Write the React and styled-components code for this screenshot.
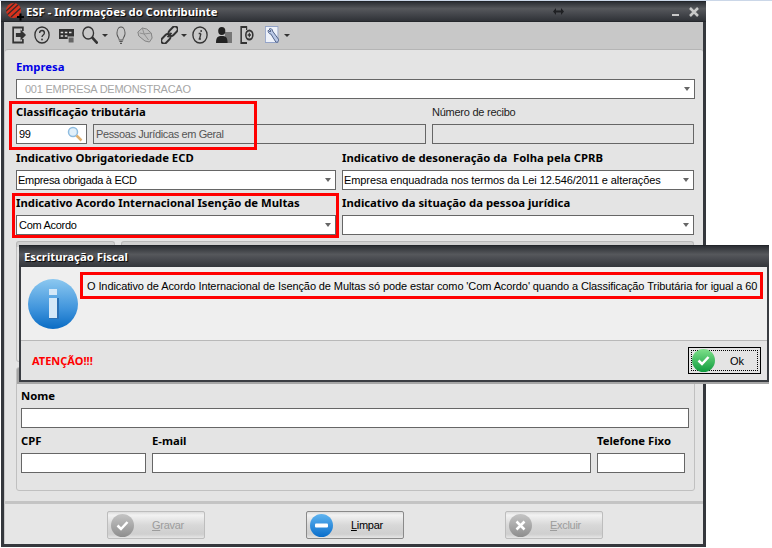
import React from "react";
import styled, { createGlobalStyle } from "styled-components";

const Global = createGlobalStyle`
  html, body { margin: 0; padding: 0; background: linear-gradient(#cbd7e8 0 1px, #fff 1px); }
  body { width: 772px; height: 548px; overflow: hidden; font-family: "Liberation Sans", Arial, sans-serif; font-size: 11px; color: #000; }
  * { box-sizing: border-box; }
`;

const boldFont = `font-family: "Noto Sans", "Liberation Sans", sans-serif; font-weight: 700; font-size: 11.3px; letter-spacing: 0;`;

const Page = styled.div`
  position: relative;
  width: 772px;
  height: 548px;
  padding: 1px 0 0 1px;
`;
const Win = styled.div`
  width: 705px;
  height: 546px;
  display: flex;
  flex-direction: column;
  background: #c8c8c8;
  border: solid #35383d;
  border-width: 0 3px 3px 3px;
`;
const TitleBar = styled.div`
  height: 21px;
  margin: 0 -3px;
  display: flex;
  align-items: center;
  padding: 0 7px 0 4px;
  background: linear-gradient(#2c2f34, #56585c 35%, #4a4c51 55%, #2f3237);
  border-top: 1px solid #22252a;
  border-bottom: 1px solid #25282c;
`;
const Title = styled.div`
  margin-left: 2px;
  ${boldFont}
  color: #fff;
  text-shadow: 1px 1px 1px #000;
  flex: 1;
`;
const ResizeMark = styled.svg`
  width: 11px;
  height: 7px;
  margin-right: 99px;
`;
const WinBtn = styled.svg`
  width: 10px;
  height: 10px;
  margin-left: 8px;
`;
const Toolbar = styled.div`
  height: 27px;
  display: flex;
  align-items: center;
  padding: 0 0 1px 8px;
  background: #c8c8c8;
`;
const Tool = styled.svg.attrs({ preserveAspectRatio: "none", viewBox: "0 0 18 18" })`
  width: ${p => p.$w}px;
  height: 18px;
  margin-right: ${p => p.$gap}px;
  flex: none;
`;
const DropCaret = styled.span`
  width: 6px;
  height: 0;
  margin: 1px ${p => p.$gap}px 0 0;
  border: 3px solid transparent;
  border-top: 3px solid #333;
  border-bottom: 0;
  flex: none;
`;
const Panel = styled.div`
  flex: none;
  margin: 0 0 0 1px;
  height: 452px;
  padding: 10px 8px 0 11px;
  background: #e4e4e4;
  border-top: 1px solid #b5b5b5;
  border-radius: 3px 3px 0 0;
  display: flex;
  flex-direction: column;
`;
const Row = styled.div`
  display: grid;
  grid-template-columns: ${p => p.$cols};
  column-gap: 6px;
  margin-top: ${p => p.$top ?? 6}px;
`;
const Field = styled.div`
  min-width: 0;
`;
const Label = styled.div`
  height: 14px;
  line-height: 14px;
  margin-bottom: 5px;
  white-space: nowrap;
  ${p => (p.$plain ? "font-weight: 400; letter-spacing: -0.25px;" : boldFont)}
  color: ${p => p.$color || "#000"};
`;
const Box = styled.div`
  height: 20px;
  display: flex;
  align-items: center;
  justify-content: space-between;
  padding: 0 ${p => p.$pr ?? 4}px 0 ${p => p.$pl ?? 1}px;
  background: ${p => (p.$off ? "#e4e4e4" : "#fff")};
  border: 1px solid #666;
  color: ${p => p.$color || "#000"};
  white-space: nowrap;
  overflow: hidden;
  letter-spacing: ${p => p.$ls ?? -0.3}px;
`;
const Caret = styled.span`
  width: 0;
  height: 0;
  border: 3px solid transparent;
  border-top: 4px solid #666;
  border-bottom: 0;
  flex: none;
`;
const TabRow = styled.div`
  margin-top: 6px;
  height: 6px;
  display: grid;
  grid-template-columns: 99px 573px;
  column-gap: 6px;
`;
const Tab = styled.div`
  background: #d0d0d0;
  border-radius: 3px 3px 0 0;
  border: 1px solid #b8b8b8;
  border-bottom: 0;
`;
const GroupTop = styled.div`
  height: 115px;
  border: 1px solid #c0c0c0;
  border-top: 0;
  border-radius: 0 0 3px 3px;
`;
const GroupLow = styled.div`
  margin-top: 5px;
  height: 124px;
  padding: 21px 4px 0 4px;
  border: 1px solid #c0c0c0;
  border-radius: 3px;
  background: linear-gradient(#a4a4a4 0 16px, #e4e4e4 16px);
`;
const NomeField = styled(Field)`
  margin-right: 1px;
`;
const Footer = styled.div`
  flex: 1;
  margin: 0 0 0 1px;
  display: flex;
  align-items: flex-start;
  gap: 101px;
  padding: 7px 0 0 102px;
  background: #e6e6e6;
  border-top: 3px solid #c4c4c4;
  border-radius: 3px 3px 0 0;
`;
const Btn = styled.div`
  width: 98px;
  height: 28px;
  display: flex;
  align-items: center;
  padding-left: 3px;
  border: 1px solid ${p => (p.$off ? "#bdbdbd" : "#8a8a8a")};
  border-radius: 2px;
  background: linear-gradient(#dcdcdc, #f2f2f2 12%, #d8d8d8 50%, #cfcfcf 85%, #e6e6e6);
  color: ${p => (p.$off ? "#9c9c9c" : "#000")};
`;
const BtnText = styled.span`
  margin-left: 18px;
  letter-spacing: -0.3px;
  u { text-underline-offset: 1px; }
`;
const Circle = styled.svg`
  width: 23px;
  height: 23px;
  flex: none;
`;
const Outline = styled.div`
  position: absolute;
  left: ${p => p.$x}px;
  top: ${p => p.$y}px;
  width: ${p => p.$w}px;
  height: ${p => p.$h}px;
  border: 3px solid #f00;
  pointer-events: none;
`;
const Dialog = styled.div`
  position: absolute;
  left: 19px;
  top: 245px;
  width: 750px;
  height: 137px;
  display: flex;
  flex-direction: column;
  background: #efefef;
  border: solid #3a3d42;
  border-width: 0 2px 2px 2px;
  box-shadow: 0 2px 0 #a6a6a6;
`;
const DlgTitle = styled.div`
  height: 22px;
  margin: 0 -2px;
  padding-left: 5px;
  display: flex;
  align-items: center;
  ${boldFont}
  color: #fff;
  text-shadow: 1px 1px 1px #000;
  background: linear-gradient(#2c2f34, #56585c 40%, #4a4c51 60%, #33363b);
  border-top: 1px solid #22252a;
`;
const DlgBody = styled.div`
  height: 73px;
  display: flex;
  padding: 12px 0 0 7px;
  background: #efefef;
`;
const InfoIcon = styled.svg`
  width: 50px;
  height: 50px;
  flex: none;
`;
const Message = styled.div`
  margin: -1px 0 0 9px;
  height: 16px;
  line-height: 16px;
  white-space: nowrap;
  letter-spacing: -0.1px;
`;
const DlgFoot = styled.div`
  flex: 1;
  display: flex;
  align-items: center;
  justify-content: space-between;
  padding: 0 6px 0 11px;
  background: #e4e4e4;
  border-top: 1px solid #b8b8b8;
`;
const Warn = styled.div`
  ${boldFont}
  font-size: 11px;
  color: #f00;
`;
const OkBtn = styled.div`
  width: 73px;
  height: 27px;
  display: flex;
  align-items: center;
  padding: 2px;
  border: 1px solid #000;
  background: #e4e4e4;
`;
const OkInner = styled.div`
  width: 100%;
  height: 100%;
  display: flex;
  align-items: center;
  border: 1px dotted #000;
  span { margin-left: 15px; }
`;

const stroke = { fill: "none", stroke: "#333", strokeWidth: 1.5 };

const Logo = () => (
  <svg width="19" height="18" viewBox="0 0 19 18">
    <defs><clipPath id="lg"><circle cx="8.500" cy="7.500" r="7.500" /></clipPath></defs>
    <circle cx="8.500" cy="7.500" r="7.500" fill="#d8321e" />
    <g clipPath="url(#lg)" stroke="#3a2a28" strokeWidth="1.300">
      <path d="M0 9 L10 0 M2 12 L14 1 M6 14 L17 4" />
    </g>
    <path d="M12 14h7M15.500 10.500v7" stroke="#000" strokeWidth="2" />
  </svg>
);

const Ico = {
  exit: (
    <Tool $w={14} $gap={8}>
      <path d="M14 5V1.500H1.500v15H14v-3.500" fill="none" stroke="#333" strokeWidth="2.200" />
      <path d="M5 7h6V3.500L18 9l-7 5.500V11H5z" fill="#333" />
    </Tool>
  ),
  help: (
    <Tool $w={16} $gap={9}>
      <circle cx="9" cy="9" r="8" {...stroke} />
      <path d="M6.300 7c.2-3.300 5.400-3.300 5.400 0 0 2-2.700 2-2.700 4" {...stroke} />
      <circle cx="9" cy="13.500" r="1" fill="#333" />
    </Tool>
  ),
  keys: (
    <Tool $w={15} $gap={8}>
      <rect x="0" y="3" width="18" height="10" fill="#333" />
      <path d="M2 6.500h3M7 6.500h3M12 6.500h3M2 10h3M7 10h3" stroke="#ddd" strokeWidth="1.500" />
      <rect x="11" y="11" width="7" height="6" fill="#666" stroke="#c8c8c8" />
    </Tool>
  ),
  search: (
    <Tool $w={16} $gap={4}>
      <circle cx="7" cy="7" r="6" {...stroke} />
      <path d="M11 11l6.500 6.500" stroke="#333" strokeWidth="2.800" />
    </Tool>
  ),
  bulb: (
    <Tool $w={12} $gap={10}>
      <path d="M9 1a6 6 0 0 0-4 10.500c1 1 1.200 1.500 1.200 2.500h5.600c0-1 .2-1.500 1.200-2.500A6 6 0 0 0 9 1z" fill="none" stroke="#555" strokeWidth="1.200" />
      <path d="M6.500 15.500h5M7.500 17.300h3" stroke="#555" strokeWidth="1.200" />
    </Tool>
  ),
  map: (
    <Tool $w={16} $gap={8}>
      <path d="M1 6l5-4 5 1 5 4 1 5-3 4-5-1-7-5z" fill="#c0c0c0" stroke="#808080" />
      <path d="M6 2l2 6 5 6M3 7l5 1 8-1" fill="none" stroke="#8e8e8e" />
    </Tool>
  ),
  link: (
    <Tool $w={17} $gap={3}>
      <g transform="rotate(-45 9 9)" fill="none" stroke="#333" strokeWidth="2">
        <rect x="-2" y="6" width="11" height="6" rx="3" />
        <rect x="9" y="6" width="11" height="6" rx="3" />
        <path d="M6 9h6" />
      </g>
    </Tool>
  ),
  info: (
    <Tool $w={16} $gap={8}>
      <circle cx="9" cy="9" r="8" {...stroke} />
      <path d="M10 7.500L8.500 13M7.500 7.500h2.300M7.500 13h2.500" {...stroke} />
      <circle cx="10.300" cy="5" r="1" fill="#333" />
    </Tool>
  ),
  user: (
    <Tool $w={16} $gap={8}>
      <rect x="10" y="6" width="8" height="11" fill="#777" />
      <circle cx="6.500" cy="5" r="4" fill="#222" />
      <path d="M0 17c0-6 2-7 6.500-7s6.500 1 6.500 7z" fill="#222" />
    </Tool>
  ),
  doc: (
    <Tool $w={14} $gap={11}>
      <path d="M9 1H1.500v16H9" fill="none" stroke="#333" strokeWidth="2" />
      <path d="M1.500 1h7v3" {...stroke} />
      <circle cx="12" cy="9" r="4.500" fill="none" stroke="#333" strokeWidth="2" />
      <path d="M9.800 9h4.400M12 6.800v4.400" stroke="#333" strokeWidth="1.400" />
    </Tool>
  ),
  tools: (
    <Tool $w={15} $gap={4}>
      <rect x="0.500" y="0.500" width="15" height="16" fill="#eef2fa" stroke="#93a3c8" />
      <path d="M5 3c2-1 4 0 4 2l7 8c1 2-1 4-3 3L7 8C5 8 3 6 4 4l2 2 1-1z" fill="#b9c8e6" stroke="#47597f" strokeWidth="1" />
    </Tool>
  ),
};

const Lens = () => (
  <svg width="16" height="16" viewBox="0 0 16 16">
    <circle cx="6" cy="6" r="4.500" fill="#e2f0fa" stroke="#8fbce0" strokeWidth="1.500" />
    <path d="M9.500 9.500l5 5" stroke="#e0b070" strokeWidth="2.500" />
  </svg>
);

const GlyphCircle = ({ id, top, bot, children }) => (
  <Circle viewBox="0 0 23 23">
    <defs>
      <linearGradient id={id} x1="0" y1="0" x2="0" y2="1">
        <stop offset="0" stopColor={top} />
        <stop offset="1" stopColor={bot} />
      </linearGradient>
    </defs>
    <circle cx="11.500" cy="11.500" r="11.500" fill={`url(#${id})`} />
    {children}
  </Circle>
);
const Check = () => <path d="M6.500 11.500l3.500 3.500 6.500-7" fill="none" stroke="#fff" strokeWidth="2.500" />;

export default function App() {
  return (
    <Page>
      <Global />
      <Win>
        <TitleBar>
          <Logo />
          <Title>ESF - Informações do Contribuinte</Title>
          <ResizeMark viewBox="0 0 11 7">
            <path d="M0 3.500L3 0v2.500h5V0l3 3.500L8 7V4.500H3V7z" fill="#1f2023" />
          </ResizeMark>
          <WinBtn viewBox="0 0 10 10"><rect x="1" y="7" width="7" height="2" fill="#c8c8c8" /></WinBtn>
          <WinBtn viewBox="0 0 10 10"><path d="M1 1l8 8M9 1l-8 8" stroke="#c8c8c8" strokeWidth="2.500" /></WinBtn>
        </TitleBar>
        <Toolbar>
          {Ico.exit}{Ico.help}{Ico.keys}{Ico.search}<DropCaret $gap={7} />{Ico.bulb}{Ico.map}{Ico.link}<DropCaret $gap={5} />
          {Ico.info}{Ico.user}{Ico.doc}{Ico.tools}<DropCaret $gap={0} />
        </Toolbar>
        <Panel>
          <Field>
            <Label $color="#0000e6">Empresa</Label>
            <Box $color="#a6a6a6" $pl={8} $ls={-0.25}>001 EMPRESA DEMONSTRACAO<Caret /></Box>
          </Field>
          <Row $cols="71px 333px 262px">
            <Field>
              <Label>Classificação tributária</Label>
              <Box $pl={2} $pr={3}>99<Lens /></Box>
            </Field>
            <Field>
              <Label>&nbsp;</Label>
              <Box $off $color="#555" $pl={2} $ls={-0.38}>Pessoas Jurídicas em Geral</Box>
            </Field>
            <Field>
              <Label $plain $color="#222">Número de recibo</Label>
              <Box $off />
            </Field>
          </Row>
          <Row $cols="320px 352px" $top={7}>
            <Field>
              <Label>Indicativo Obrigatoriedade ECD</Label>
              <Box>Empresa obrigada à ECD<Caret /></Box>
            </Field>
            <Field>
              <Label>Indicativo de desoneração da&nbsp; Folha pela CPRB</Label>
              <Box $ls={-0.1}>Empresa enquadrada nos termos da Lei 12.546/2011 e alterações<Caret /></Box>
            </Field>
          </Row>
          <Row $cols="320px 352px">
            <Field>
              <Label>Indicativo Acordo Internacional Isenção de Multas</Label>
              <Box $pl={2}>Com Acordo<Caret /></Box>
            </Field>
            <Field>
              <Label>Indicativo da situação da pessoa jurídica</Label>
              <Box><span /><Caret /></Box>
            </Field>
          </Row>
          <TabRow><Tab /><Tab /></TabRow>
          <GroupTop />
          <GroupLow>
            <NomeField>
              <Label>Nome</Label>
              <Box />
            </NomeField>
            <Row $cols="125px 439px 88px">
              <Field><Label>CPF</Label><Box /></Field>
              <Field><Label>E-mail</Label><Box /></Field>
              <Field><Label>Telefone Fixo</Label><Box /></Field>
            </Row>
          </GroupLow>
        </Panel>
        <Footer>
          <Btn $off>
            <GlyphCircle id="g1" top="#c4c4c4" bot="#8e8e8e"><Check /></GlyphCircle>
            <BtnText><u>G</u>ravar</BtnText>
          </Btn>
          <Btn>
            <GlyphCircle id="g2" top="#5fb4f0" bot="#0a6ecb"><rect x="5" y="9.500" width="13" height="4" rx="1" fill="#fff" /></GlyphCircle>
            <BtnText><u>L</u>impar</BtnText>
          </Btn>
          <Btn $off>
            <GlyphCircle id="g3" top="#c4c4c4" bot="#8e8e8e"><path d="M7.500 7.500l8 8M15.500 7.500l-8 8" stroke="#fff" strokeWidth="2.500" /></GlyphCircle>
            <BtnText><u>E</u>xcluir</BtnText>
          </Btn>
        </Footer>
      </Win>
      <Outline $x={9} $y={101} $w={248} $h={49} />
      <Outline $x={12} $y={193} $w={327} $h={45} />
      <Dialog>
        <DlgTitle>Escrituração Fiscal</DlgTitle>
        <DlgBody>
          <InfoIcon viewBox="0 0 50 50">
            <defs>
              <linearGradient id="ib" x1="0" y1="0" x2="0" y2="1">
                <stop offset="0" stopColor="#8cc8f0" />
                <stop offset="0.6" stopColor="#3f94dc" />
                <stop offset="1" stopColor="#0a6cc4" />
              </linearGradient>
            </defs>
            <circle cx="25" cy="25" r="25" fill="url(#ib)" />
            <rect x="21" y="10" width="8" height="6" fill="#d4e8f8" />
            <rect x="21" y="19" width="8" height="20" fill="#d4e8f8" />
            <path d="M29 19h2v21h-10v-1h8z" fill="#2a70b4" />
          </InfoIcon>
          <Message>O Indicativo de Acordo Internacional de Isenção de Multas só pode estar como 'Com Acordo' quando a Classificação Tributária for igual a 60</Message>
        </DlgBody>
        <DlgFoot>
          <Warn>ATENÇÃO!!!</Warn>
          <OkBtn>
            <OkInner>
              <GlyphCircle id="g4" top="#7ee08a" bot="#0f9c3e"><Check /></GlyphCircle>
              <span>Ok</span>
            </OkInner>
          </OkBtn>
        </DlgFoot>
      </Dialog>
      <Outline $x={80} $y={272} $w={683} $h={27} />
    </Page>
  );
}
